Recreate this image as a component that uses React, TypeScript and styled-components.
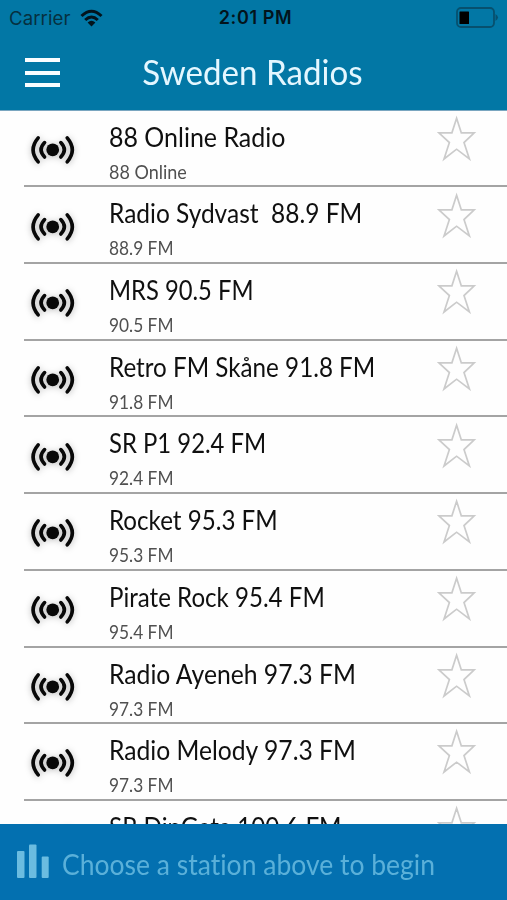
import React from "react";
import styled, { createGlobalStyle } from "styled-components";

const GlobalStyle = createGlobalStyle`
  * { box-sizing: border-box; }
  body {
    margin: 0;
    background: #fefefe;
    font-family: Lato, "Open Sans", sans-serif;
    font-variant-ligatures: none;
  }
`;

const Screen = styled.div`
  display: flex;
  flex-direction: column;
  width: 507px;
  height: 900px;
  overflow: hidden;
  background: #fefefe;
`;

const Header = styled.header`
  flex: none;
  height: 110px;
  background: #0277a5;
  box-shadow: 0 1px 0 #7aa6c0;
  z-index: 1;
`;

const StatusBar = styled.div`
  display: grid;
  grid-template-columns: 1fr auto 1fr;
  align-items: center;
  height: 35px;
  padding: 0 8px 0 9px;
  color: #062431;
  font-family: Inter, "Liberation Sans", sans-serif;
`;

const Carrier = styled.div`
  display: flex;
  align-items: center;
  gap: 9px;
  font-size: 18.6px;
  letter-spacing: 0.1px;
  color: #06303f;
`;

const Clock = styled.div`
  font-size: 18px;
  font-weight: 600;
  letter-spacing: 0.65px;
  margin-left: 3px;
  color: #03141c;
`;

const Battery = styled.svg`
  justify-self: end;
  display: block;
`;

const NavBar = styled.div`
  display: grid;
  grid-template-columns: 60px 1fr 60px;
  align-items: center;
  height: 75px;
`;

const MenuButton = styled.button`
  display: flex;
  flex-direction: column;
  gap: 8.5px;
  width: 60px;
  padding: 0 0 0 25px;
  border: 0;
  background: none;
`;

const MenuLine = styled.span`
  width: 35px;
  height: 4px;
  background: #fafdff;
`;

const Title = styled.h1`
  margin: -2px 0 0 -2px;
  text-align: center;
  font-size: 34.5px;
  line-height: 40px;
  font-weight: 400;
  transform: scaleX(0.96);
  color: #e4f7ff;
`;

const StationList = styled.ul`
  flex: 1;
  min-height: 0;
  margin: 0;
  padding: 0.7px 0 0;
  list-style: none;
  overflow: hidden;
`;

const Station = styled.li`
  display: flex;
  height: 76.7px;
  margin-left: 24px;
  border-bottom: 2px solid #a4a4a4;
`;

const StationIcon = styled.svg`
  flex: none;
  width: 58px;
  height: 50px;
  margin: 14.3px 27px 0 0;
  filter: drop-shadow(0 1px 3px rgba(0, 0, 0, 0.28));
`;

const StationText = styled.div`
  flex: 1;
  white-space: pre;
`;

const Name = styled.div<{ $stretch: number }>`
  width: max-content;
  padding-top: 11px;
  font-size: 26px;
  line-height: 31px;
  transform: scaleX(${(p) => p.$stretch});
  transform-origin: left;
  color: #101010;
`;

const Frequency = styled.div<{ $stretch: number }>`
  width: max-content;
  padding-top: 8px;
  font-size: 18.7px;
  line-height: 22px;
  transform: scaleX(${(p) => p.$stretch});
  transform-origin: left;
  color: #505050;
`;

const Star = styled.svg`
  flex: none;
  width: 42px;
  height: 48px;
  margin: 3.3px 29px 0 0;
`;

const Player = styled.footer`
  flex: none;
  display: flex;
  align-items: center;
  height: 76px;
  padding: 0 0 0 17px;
  background: #0370b0;
`;

const Bars = styled.svg`
  flex: none;
  margin: -2px 12px 0 0;
`;

const Prompt = styled.div`
  margin-top: 4px;
  font-size: 28.5px;
  line-height: 36px;
  white-space: nowrap;
  transform: scaleX(0.93);
  transform-origin: left;
  color: #5ab0d9;
`;

type StationInfo = { name: string; freq?: string; stretch: number; freqStretch?: number };

const stations: StationInfo[] = [
  { name: "88 Online Radio", freq: "88 Online", stretch: 0.96, freqStretch: 0.963 },
  { name: "Radio Sydvast  88.9 FM", freq: "88.9 FM", stretch: 0.941 },
  { name: "MRS 90.5 FM", freq: "90.5 FM", stretch: 0.914 },
  { name: "Retro FM Skåne 91.8 FM", freq: "91.8 FM", stretch: 0.931 },
  { name: "SR P1 92.4 FM", freq: "92.4 FM", stretch: 0.918 },
  { name: "Rocket 95.3 FM", freq: "95.3 FM", stretch: 0.929 },
  { name: "Pirate Rock 95.4 FM", freq: "95.4 FM", stretch: 0.927 },
  { name: "Radio Ayeneh 97.3 FM", freq: "97.3 FM", stretch: 0.95 },
  { name: "Radio Melody 97.3 FM", freq: "97.3 FM", stretch: 0.948 },
  { name: "SR DinGata 100.6 FM", stretch: 0.932 },
];

const BroadcastIcon = () => (
  <StationIcon viewBox="24 15 58 50" fill="none" stroke="#080808" strokeWidth="3.6" strokeLinecap="round">
    <circle cx="52.7" cy="39.8" r="6.4" fill="#080808" stroke="none" />
    <path d="M44.6 32.6Q37.6 39.8 44.6 47M60.8 32.6Q67.8 39.8 60.8 47" />
    <path d="M38.2 27.8Q28 39.8 38.2 51.8M67.2 27.8Q77.4 39.8 67.2 51.8" />
  </StationIcon>
);

const StarIcon = () => (
  <Star viewBox="436 5 42 48" fill="none" stroke="#cbcbcb" strokeWidth="1.7">
    <path d="M456.6 9.3L461.3 23.8H474.2L464 33.6L469.4 50L456.6 40.2L444 50L449.4 33.6L438.9 23.8H451.9Z" />
  </Star>
);

export default function App() {
  return (
    <>
      <GlobalStyle />
      <Screen>
        <Header>
          <StatusBar>
            <Carrier>
              Carrier
              <svg width="23" height="18" viewBox="0 0 23 18" fill="none" stroke="#03141c" strokeWidth="3">
                <path d="M1.5 7Q11.5-2.5 21.5 7M5.2 11Q11.5 5 17.8 11" />
                <path d="M7.6 13.4Q11.5 10 15.4 13.4L11.5 17.5Z" fill="#03141c" stroke="none" />
              </svg>
            </Carrier>
            <Clock>2:01 PM</Clock>
            <Battery width="43" height="22" viewBox="0 0 43 22">
              <rect x="1" y="1" width="37" height="19" rx="4" fill="none" stroke="#07506e" strokeWidth="1.8" />
              <rect x="3.5" y="4.5" width="9.5" height="12.5" rx="0.5" fill="#000" />
              <path d="M39.5 7Q44.5 10.5 39.5 14Z" fill="#07506e" />
            </Battery>
          </StatusBar>
          <NavBar>
            <MenuButton aria-label="Menu">
              <MenuLine />
              <MenuLine />
              <MenuLine />
            </MenuButton>
            <Title>Sweden Radios</Title>
          </NavBar>
        </Header>
        <StationList>
          {stations.map((s) => (
            <Station key={s.name}>
              <BroadcastIcon />
              <StationText>
                <Name $stretch={s.stretch}>{s.name}</Name>
                {s.freq && <Frequency $stretch={s.freqStretch ?? 0.926}>{s.freq}</Frequency>}
              </StationText>
              <StarIcon />
            </Station>
          ))}
        </StationList>
        <Player>
          <Bars width="33" height="34" viewBox="0 0 33 34" fill="#6bbce0">
            <rect x="0" y="7" width="7.5" height="27" rx="1" />
            <rect x="12" y="0.5" width="7.5" height="33.5" rx="1" />
            <rect x="24.7" y="12.5" width="7" height="21.5" rx="1" />
          </Bars>
          <Prompt>Choose a station above to begin</Prompt>
        </Player>
      </Screen>
    </>
  );
}
